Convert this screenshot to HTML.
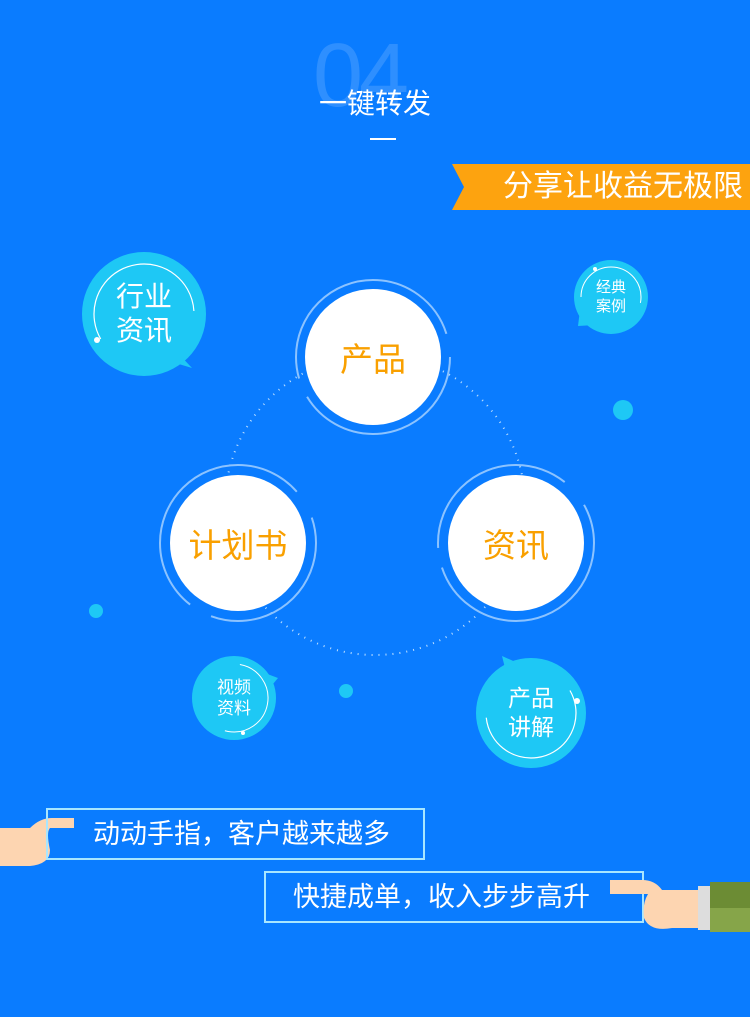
<!DOCTYPE html>
<html><head><meta charset="utf-8"><style>
*{margin:0;padding:0;box-sizing:border-box}
body{width:750px;height:1017px;background:#0a7cff;position:relative;overflow:hidden;font-family:"Liberation Sans","Noto Sans CJK SC",sans-serif;color:#fff}
.a{position:absolute}
.c{position:absolute;border-radius:50%;display:flex;align-items:center;justify-content:center;text-align:center}
.box{position:absolute;border:2px solid #a8e6ff;font-size:27px;line-height:48px}
</style></head><body>
<div class="a" style="left:313px;top:26px;font-size:90px;color:#2e8fff;letter-spacing:-4px;line-height:100px">04</div>
<div class="a" style="left:0;width:750px;top:84px;text-align:center;font-size:28px;line-height:40px">一键转发</div>
<div class="a" style="left:370px;top:138px;width:26px;height:2px;background:#fff"></div>
<svg class="a" style="left:452px;top:164px" width="298" height="46"><polygon points="0,0 298,0 298,46 0,46 12,23" fill="#fda30f"/></svg>
<div class="a" style="left:503px;top:166px;font-size:30px;line-height:42px">分享让收益无极限</div>
<svg class="a" style="left:0;top:0" width="750" height="1017">
<circle cx="375" cy="505" r="150" fill="none" stroke="#bfe0ff" stroke-width="2" stroke-dasharray="1 6"/>
<circle cx="373" cy="357" r="77" fill="none" stroke="#8cc3ff" stroke-width="2" stroke-dasharray="200 20 240 24"/>
<circle cx="238" cy="543" r="78" fill="none" stroke="#8cc3ff" stroke-width="2" stroke-dasharray="150 24 260 30"/>
<circle cx="516" cy="543" r="78" fill="none" stroke="#8cc3ff" stroke-width="2" stroke-dasharray="220 20 180 30"/>
<circle cx="623" cy="410" r="10" fill="#1ec8f5"/>
<circle cx="96" cy="611" r="7" fill="#1ec8f5"/>
<circle cx="346" cy="691" r="7" fill="#1ec8f5"/>
<polygon points="175,350 192,368 172,362" fill="#1ec8f5"/>
<polygon points="580,310 595,325 578,326" fill="#1ec8f5"/>
<polygon points="262,672 278,678 268,690" fill="#1ec8f5"/>
<polygon points="502,656 520,664 506,672" fill="#1ec8f5"/>
</svg>
<div class="c" style="left:305px;top:289px;width:136px;height:136px;background:#fff;color:#f9a000;font-size:33px">产品</div>
<div class="c" style="left:170px;top:475px;width:136px;height:136px;background:#fff;color:#f9a000;font-size:33px">计划书</div>
<div class="c" style="left:448px;top:475px;width:136px;height:136px;background:#fff;color:#f9a000;font-size:33px">资讯</div>
<div class="c" style="left:82px;top:252px;width:124px;height:124px;background:#1ec8f5;font-size:28px;line-height:34px">行业<br>资讯</div>
<div class="c" style="left:574px;top:260px;width:74px;height:74px;background:#1ec8f5;font-size:15px;line-height:19px">经典<br>案例</div>
<div class="c" style="left:192px;top:656px;width:84px;height:84px;background:#1ec8f5;font-size:17px;line-height:21px">视频<br>资料</div>
<div class="c" style="left:476px;top:658px;width:110px;height:110px;background:#1ec8f5;font-size:23px;line-height:29px">产品<br>讲解</div>
<svg class="a" style="left:0;top:0" width="750" height="1017">
<circle cx="144" cy="314" r="50" fill="none" stroke="#fff" stroke-width="1.2" stroke-dasharray="180 200" transform="rotate(150 144 314)"/>
<circle cx="97" cy="340" r="3" fill="#fff"/>
<circle cx="531" cy="713" r="45" fill="none" stroke="#fff" stroke-width="1.2" stroke-dasharray="160 200" transform="rotate(-30 531 713)"/>
<circle cx="577" cy="701" r="3" fill="#fff"/>
<circle cx="234" cy="698" r="34" fill="none" stroke="#fff" stroke-width="1" stroke-dasharray="110 200" transform="rotate(-80 234 698)"/>
<circle cx="243" cy="733" r="2" fill="#fff"/>
<circle cx="611" cy="297" r="30" fill="none" stroke="#fff" stroke-width="1" stroke-dasharray="100 200" transform="rotate(180 611 297)"/>
<circle cx="595" cy="269" r="2" fill="#fff"/>
</svg>
<svg class="a" style="left:0;top:810px" width="80" height="60"><path d="M0 18 H30 Q40 8 52 8 H74 V18 H50 Q46 22 50 40 Q50 54 30 56 H0Z" fill="#fdd5b1"/></svg>
<div class="box" style="left:46px;top:808px;width:379px;height:52px;padding-left:45px">动动手指，客户越来越多</div>
<div class="box" style="left:264px;top:871px;width:380px;height:52px;padding-left:27px">快捷成单，收入步步高升</div>
<svg class="a" style="left:610px;top:878px" width="140" height="60"><path d="M0 2 H32 Q45 2 52 12 H90 V50 H62 Q40 54 34 40 Q32 26 38 16 H0Z" fill="#fdd5b1"/><rect x="88" y="8" width="12" height="44" fill="#ddd"/><rect x="100" y="4" width="40" height="26" fill="#6c8c34"/><rect x="100" y="30" width="40" height="24" fill="#86a549"/></svg>
</body></html>
